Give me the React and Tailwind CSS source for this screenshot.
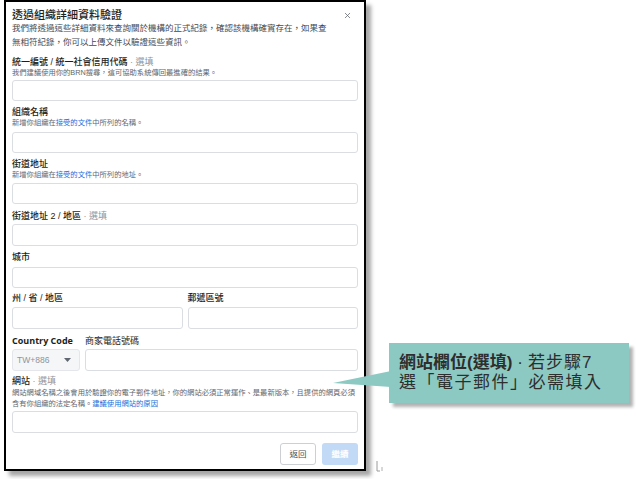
import React from "react";
import { X } from "lucide-react";

const font = { fontFamily: '"Liberation Sans", "Noto Sans CJK TC", sans-serif' };

function Label({ children, optional, weight = "font-medium", className = "" }) {
  return (
    <div className={`text-[9px] leading-[12px] text-[#1c1e21] whitespace-nowrap ${weight} ${className}`}>
      {children}
      {optional && <span className="font-normal text-[#8d949e]"> · 選填</span>}
    </div>
  );
}

function Helper({ children }) {
  return (
    <div className="text-[7.3px] leading-[10px] text-[#606770] whitespace-nowrap">{children}</div>
  );
}

function Field({ className = "" }) {
  return <div className={`rounded-[3px] border border-[#dadde1] bg-white ${className}`} />;
}

function Link({ children }) {
  return <span className="text-[#216fdb]">{children}</span>;
}

function Modal() {
  return (
    <div className="ml-[4px] w-[362px] h-[471px] border-2 border-black bg-white shadow-[5px_5px_4px_rgba(0,0,0,0.35)] px-[6px] pt-[7px]">
      <div className="flex items-center justify-between pr-[6px]">
        <h2 className="text-[11px] leading-[12px] font-medium text-[#1c1e21]">透過組織詳細資料驗證</h2>
        <X className="h-[9px] w-[9px] text-[#606770]" strokeWidth={2} />
      </div>
      <p className="text-[8.5px] leading-[14px] text-[#444950] whitespace-nowrap">
        我們將透過這些詳細資料來查詢關於機構的正式紀錄，確認該機構確實存在，如果查
        <br />
        無相符紀錄，你可以上傳文件以驗證這些資訊。
      </p>

      <Label optional className="mt-[7px]">統一編號 / 統一社會信用代碼</Label>
      <Helper>我們建議使用你的BRN搜尋，這可協助系統傳回最進確的結果。</Helper>
      <Field className="mt-[2px] h-[21px]" />

      <Label className="mt-[5px]">組織名稱</Label>
      <Helper>
        新增你組織在<Link>接受的文件</Link>中所列的名稱。
      </Helper>
      <Field className="mt-[4px] h-[21px]" />

      <Label className="mt-[5px]">街道地址</Label>
      <Helper>
        新增你組織在<Link>接受的文件</Link>中所列的地址。
      </Helper>
      <Field className="mt-[3px] h-[21px]" />

      <Label optional className="mt-[6px]">街道地址 2 / 地區</Label>
      <Field className="mt-[2px] h-[22px]" />

      <Label className="mt-[5px]">城市</Label>
      <Field className="mt-[4px] h-[21px]" />

      <div className="mt-[4px] grid grid-cols-2 gap-x-[5px]">
        <div>
          <Label>州 / 省 / 地區</Label>
          <Field className="mt-[3px] h-[22px]" />
        </div>
        <div>
          <Label>郵遞區號</Label>
          <Field className="mt-[3px] h-[22px]" />
        </div>
      </div>

      <div className="mt-[6px] flex gap-[5px]">
        <div className="w-[68px]">
          <Label weight="font-bold" className="[font-family:'Open_Sans',sans-serif]">Country Code</Label>
          <div className="mt-[2px] h-[22px] rounded-[3px] border border-[#e4e6eb] bg-[#f5f6f7] flex items-center justify-between pl-[4px] pr-[8px]">
            <span className="text-[8.5px] text-[#8d949e]">TW+886</span>
            <svg width="7" height="4" viewBox="0 0 7 4">
              <path d="M0 0h7L3.5 4z" fill="#606770" />
            </svg>
          </div>
        </div>
        <div className="flex-1">
          <Label weight="font-normal">商家電話號碼</Label>
          <Field className="mt-[2px] h-[22px]" />
        </div>
      </div>

      <Label optional className="mt-[4px]">網站</Label>
      <div className="text-[7.3px] leading-[11px] text-[#606770] whitespace-nowrap">
        網站網域名稱之後會用於驗證你的電子郵件地址，你的網站必須正常運作、是最新版本，且提供的網頁必須
        <br />
        含有你組織的法定名稱。<Link>建議使用網站的原因</Link>
      </div>
      <Field className="mt-[2px] h-[22px]" />

      <div className="mt-[10px] flex justify-end gap-[6px]">
        <button className="h-[22px] w-[36px] rounded-[3px] border border-[#ccd0d5] bg-white text-[8.5px] text-[#4b4f56]">
          返回
        </button>
        <button className="h-[22px] w-[36px] rounded-[3px] bg-[#c2daf6] text-[8.5px] text-white font-semibold">
          繼續
        </button>
      </div>
    </div>
  );
}

function Callout() {
  return (
    <div className="absolute left-[333px] top-[343px]">
      <svg className="absolute left-0 top-[28px]" width="60" height="20" viewBox="0 0 60 20">
        <polygon points="0,12 58,0 58,16" fill="#8cc9c2" />
      </svg>
      <div className="ml-[56px] w-[240px] h-[60px] bg-[#8cc9c2] shadow-[4px_4px_3px_rgba(0,0,0,0.3)] pl-[10px] pt-[10px] text-[17px] leading-[20px] text-[#2e2e2e] whitespace-nowrap">
        <span className="font-bold">網站欄位(選填)</span>
        <span className="mx-[5px]">·</span>
        <span className="tracking-[1px]">若步驟7</span>
        <br />
        <span className="tracking-[1.5px]">選「電子郵件」必需填入</span>
      </div>
    </div>
  );
}

export default function App() {
  return (
    <div className="relative w-[636px] h-[479px] bg-white overflow-hidden" style={font}>
      <Modal />
      <Callout />
      <svg className="absolute left-[376px] top-[459px]" width="8" height="14" viewBox="0 0 8 14">
        <path d="M1 2v10h3" stroke="#9a9a9a" strokeWidth="1" fill="none" />
        <path d="M6 8v4" stroke="#b0b0b0" strokeWidth="1" />
      </svg>
    </div>
  );
}
